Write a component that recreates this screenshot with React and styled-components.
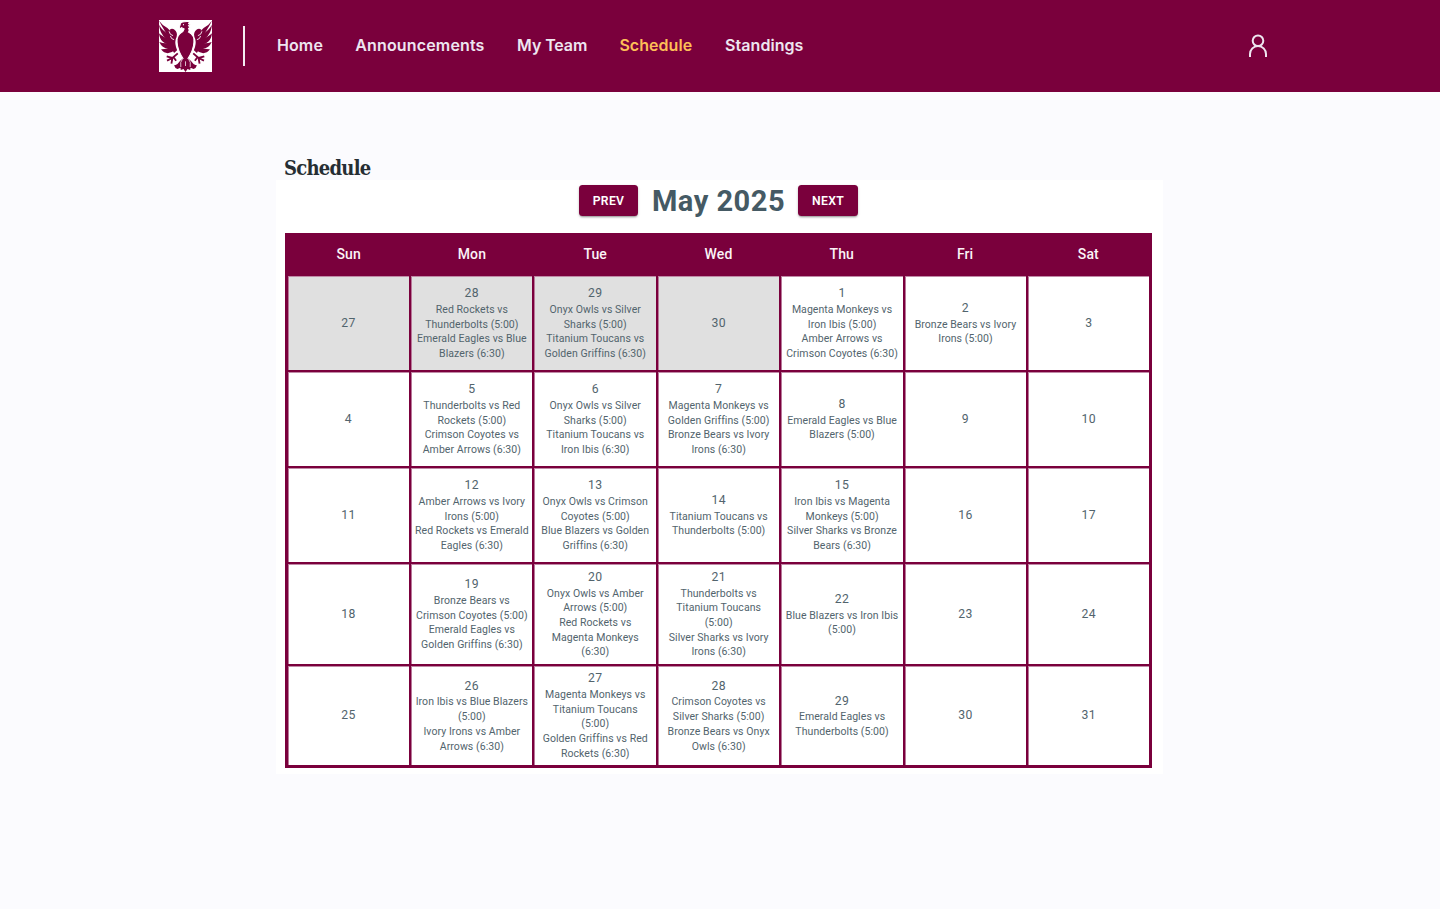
import React from "react";
import styled, { createGlobalStyle } from "styled-components";

const MAROON = "#7a003c";

const GlobalStyle = createGlobalStyle`
  * { box-sizing: border-box; }
  body { margin: 0; background: #fbfbfe; font-family: Roboto, sans-serif; }
`;

const Page = styled.div`
  min-height: 909px;
  background: #fbfbfe;
`;

const Header = styled.header`
  height: 92px;
  background: ${MAROON};
  display: flex;
  align-items: center;
  padding: 0 172px 0 159px;
`;

const Divider = styled.div`
  width: 2px;
  height: 40px;
  margin-left: 31px;
  margin-right: 32px;
  background: #f4ecf2;
`;

const Nav = styled.nav`
  display: flex;
  flex: 1;
  padding-bottom: 2px;
`;

const NavLink = styled.a`
  width: ${(p) => p.$w}px;
  margin-right: 32.5px;
  white-space: nowrap;
  font-family: Inter, sans-serif;
  font-size: 16px;
  font-weight: 600;
  line-height: 24px;
  letter-spacing: ${(p) => p.$ls}px;
  color: ${(p) => (p.$active ? "#fdbf57" : "#eee6f0")};
`;

const Main = styled.main`
  width: 888px;
  margin-left: 276px;
  padding-top: 64px;
`;

const Title = styled.h1`
  margin: 0;
  height: 24px;
  padding-left: 8px;
  font-family: "DejaVu Serif Condensed", "DejaVu Serif", serif;
  font-stretch: condensed;
  font-size: 20px;
  line-height: 24px;
  font-weight: 700;
  letter-spacing: -0.75px;
  color: #262e33;
`;

const Panel = styled.section`
  height: 594px;
  width: 887px;
  background: #fff;
  padding: 4px 11px 0 9px;
`;

const Toolbar = styled.div`
  height: 49px;
  display: flex;
  align-items: flex-start;
  padding-left: 294px;
`;

const Button = styled.button`
  width: ${(p) => p.$w}px;
  height: 31px;
  margin-top: 1px;
  padding: 0;
  border: 0;
  border-radius: 3.5px;
  background: ${MAROON};
  color: #fff;
  font: 600 12.2px/30px Roboto, sans-serif;
  letter-spacing: 0.3px;
  box-shadow: 0 2px 2px -1px rgba(0, 0, 0, 0.3), 0 1px 3px rgba(0, 0, 0, 0.2);
`;

const Month = styled.h2`
  margin: 0;
  width: 160px;
  padding-left: 1px;
  text-align: center;
  white-space: nowrap;
  font-size: 29px;
  line-height: 34px;
  font-weight: 700;
  letter-spacing: 0.5px;
  color: #455a64;
`;

const Weekdays = styled.div`
  height: 43px;
  display: grid;
  grid-template-columns: repeat(7, 1fr);
  align-items: center;
  text-align: center;
  background: ${MAROON};
  color: #fbf3f7;
  font-size: 14px;
  font-weight: 500;
  letter-spacing: 0.1px;
  padding: 0 2px 1px;
`;

const Grid = styled.div`
  display: grid;
  grid-template-columns: repeat(7, 1fr);
  grid-template-rows: 94px 94px 94px 100px 99px;
  gap: 2px;
  padding: 0 2.7px 3px 2.5px;
  background: ${MAROON};
`;

const Cell = styled.div`
  display: flex;
  flex-direction: column;
  align-items: center;
  justify-content: center;
  min-width: 0;
  padding-right: 0.5px;
  background: ${(p) => (p.$muted ? "#e0e0e0" : "#fff")};
  border-left: 1px solid #b8789a;
  border-top: 1px solid #c08aa7;
  color: #52646d;
`;

const Day = styled.div`
  font-size: 12.2px;
  line-height: 17px;
  letter-spacing: 0.4px;
  padding-bottom: 0.6px;
`;

const Line = styled.div`
  font-size: 10.5px;
  line-height: 14.7px;
  letter-spacing: 0.07px;
  white-space: nowrap;
`;

const links = [
  ["Home", 45.8, 0.1],
  ["Announcements", 129.3, 0.15],
  ["My Team", 69.8, -0.1],
  ["Schedule", 73.2, 0.05],
  ["Standings", 78, 0.05],
];

const days = [
  [27], [28, "Red Rockets vs|Thunderbolts (5:00)|Emerald Eagles vs Blue|Blazers (6:30)"],
  [29, "Onyx Owls vs Silver|Sharks (5:00)|Titanium Toucans vs|Golden Griffins (6:30)"], [30],
  [1, "Magenta Monkeys vs|Iron Ibis (5:00)|Amber Arrows vs|Crimson Coyotes (6:30)"],
  [2, "Bronze Bears vs Ivory|Irons (5:00)"], [3],
  [4], [5, "Thunderbolts vs Red|Rockets (5:00)|Crimson Coyotes vs|Amber Arrows (6:30)"],
  [6, "Onyx Owls vs Silver|Sharks (5:00)|Titanium Toucans vs|Iron Ibis (6:30)"],
  [7, "Magenta Monkeys vs|Golden Griffins (5:00)|Bronze Bears vs Ivory|Irons (6:30)"],
  [8, "Emerald Eagles vs Blue|Blazers (5:00)"], [9], [10],
  [11], [12, "Amber Arrows vs Ivory|Irons (5:00)|Red Rockets vs Emerald|Eagles (6:30)"],
  [13, "Onyx Owls vs Crimson|Coyotes (5:00)|Blue Blazers vs Golden|Griffins (6:30)"],
  [14, "Titanium Toucans vs|Thunderbolts (5:00)"],
  [15, "Iron Ibis vs Magenta|Monkeys (5:00)|Silver Sharks vs Bronze|Bears (6:30)"], [16], [17],
  [18], [19, "Bronze Bears vs|Crimson Coyotes (5:00)|Emerald Eagles vs|Golden Griffins (6:30)"],
  [20, "Onyx Owls vs Amber|Arrows (5:00)|Red Rockets vs|Magenta Monkeys|(6:30)"],
  [21, "Thunderbolts vs|Titanium Toucans|(5:00)|Silver Sharks vs Ivory|Irons (6:30)"],
  [22, "Blue Blazers vs Iron Ibis|(5:00)"], [23], [24],
  [25], [26, "Iron Ibis vs Blue Blazers|(5:00)|Ivory Irons vs Amber|Arrows (6:30)"],
  [27, "Magenta Monkeys vs|Titanium Toucans|(5:00)|Golden Griffins vs Red|Rockets (6:30)"],
  [28, "Crimson Coyotes vs|Silver Sharks (5:00)|Bronze Bears vs Onyx|Owls (6:30)"],
  [29, "Emerald Eagles vs|Thunderbolts (5:00)"], [30], [31],
];

const Wing = () => (
  <g>
    <path d="M0 2 Q10 16 25 24 L34 33 L32 29 Q41 22 50 33 Q57 42 50 57 Q46 72 54 91 L45 99 L36 83 L33 55 Q18 37 0 2Z" />
    <path d="M0 14 Q10 33 31 43 L38 62 Q5 55 0 14Z" />
    <path d="M0 40 Q13 54 36 57 L41 73 Q4 76 0 40Z" />
    <path d="M1 66 Q18 73 38 68 L44 81 Q13 94 1 66Z" />
    <path d="M6 88 Q24 89 41 76 L48 90 Q23 110 6 88Z" />
    <path d="M30 34 Q32 45 42 47 M34 48 Q36 58 45 59" fill="none" stroke="#fff" strokeWidth="2.6" />
    <path d="M56 100 L40 114 M40 114 L23 109 M40 114 L24 122 M40 114 L37 131 M43 111 L51 122" fill="none" stroke={MAROON} strokeWidth="5.5" />
  </g>
);

const Logo = () => (
  <svg width="53" height="52" viewBox="0 0 158 156" preserveAspectRatio="none" fill={MAROON}>
    <rect width="158" height="156" fill="#fff" />
    <Wing />
    <g transform="translate(158 0) scale(-1 1)"><Wing /></g>
    <path d="M63 15 Q63 5 76 5 L91 4 L88 11 L94 14 L88 17 L93 23 L88 25 Q92 32 88 36 Q107 46 104 67 Q103 92 84 119 L74 119 Q55 92 54 67 Q51 46 71 35 L75 27 L67 23 L63 27 Q59 21 63 15Z" stroke="#fff" strokeWidth="3" />
    <circle cx="73" cy="14" r="1.8" fill="#fff" />
    <path d="M70 116 L88 116 Q97 123 103 132 Q109 136 113 136 Q111 145 103 147 L94 143 L93 150 L85 147 L79 156 L73 147 L65 150 L64 143 L55 147 Q47 145 45 136 Q49 136 55 132 Q61 123 70 116Z" />
    <path d="M70 117 Q62 125 65 141 M88 117 Q96 125 93 141 M79 124 L79 138" fill="none" stroke="#fff" strokeWidth="2.2" />
  </svg>
);

const UserIcon = () => (
  <svg width="20" height="24" viewBox="0 0 20 24" fill="none" stroke="#eee6f0" strokeWidth="2">
    <circle cx="10" cy="6.7" r="5.3" />
    <path d="M2 23v-3a8 8 0 0 1 16 0v3" />
  </svg>
);

export default function App() {
  return (
    <Page>
      <GlobalStyle />
      <Header>
        <Logo />
        <Divider />
        <Nav>
          {links.map(([label, w, ls]) => (
            <NavLink key={label} $w={w} $ls={ls} $active={label === "Schedule"}>{label}</NavLink>
          ))}
        </Nav>
        <UserIcon />
      </Header>
      <Main>
        <Title>Schedule</Title>
        <Panel>
          <Toolbar>
            <Button $w={59}>PREV</Button>
            <Month>May 2025</Month>
            <Button $w={60}>NEXT</Button>
          </Toolbar>
          <Weekdays>
            {["Sun", "Mon", "Tue", "Wed", "Thu", "Fri", "Sat"].map((d) => <div key={d}>{d}</div>)}
          </Weekdays>
          <Grid>
            {days.map(([n, text], i) => (
              <Cell key={i} $muted={i < 4}>
                <Day>{n}</Day>
                {text && text.split("|").map((t, j) => <Line key={j}>{t}</Line>)}
              </Cell>
            ))}
          </Grid>
        </Panel>
      </Main>
    </Page>
  );
}
